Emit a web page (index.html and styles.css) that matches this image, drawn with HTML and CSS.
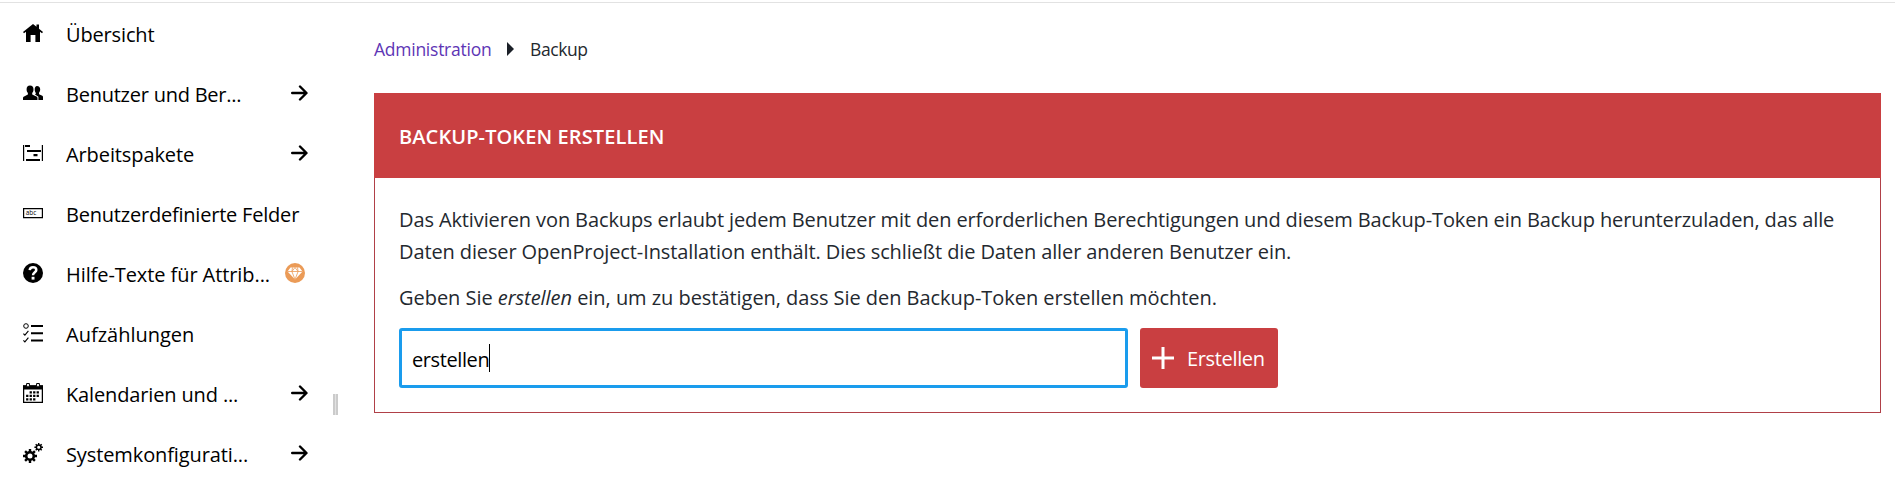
FILE: index.html
```html
<!DOCTYPE html>
<html lang="de">
<head>
<meta charset="utf-8">
<title>Backup</title>
<link rel="stylesheet" href="styles.css">
</head>
<body>
<svg width="0" height="0" class="sprite"><defs>
<symbol id="arrow" viewBox="0 0 17 16"><path d="M1.200 8h14M9 1.500 15.500 8 9 14.500" fill="none" stroke="#000" stroke-width="2.400" stroke-linecap="round" stroke-linejoin="round"/></symbol>
</defs></svg>
<div class="layout">
<nav class="sidebar">
  <a class="item"><svg class="icon" viewBox="0 0 20 20"><path d="M10 1 0 9l1 1.200 2-1.400V19h4.600v-7h4.800v7H17V8.800l2 1.400L20 9l-4-3.300V1.500h-2.500v2.300z"/></svg><span class="label l1">Übersicht</span></a>
  <a class="item"><svg class="icon" viewBox="0 0 20 20"><path d="M14 3c2 0 3.200 1.300 3.200 3.300 0 1.500-.5 2.700-1.200 3.400v1.500l3.300 1.600c.5.300.7.700.7 1.300V17h-4.600v-3.300L12 11.400c.6-.3.900-.7 1-1.300-.8-.8-1.300-2.200-1.300-3.900 0-1.900.9-3.200 2.300-3.200z"/><path d="M7 2.500c2.300 0 3.500 1.500 3.500 3.700 0 1.600-.5 2.900-1.300 3.700v1.600l4.200 2c.8.400 1.100.8 1.100 1.600v2H0v-2c0-.8.300-1.200 1.100-1.600l3.800-2V9.900C4.100 9.100 3.600 7.800 3.600 6.200 3.600 4 4.700 2.500 7 2.500z"/></svg><span class="label l2">Benutzer und Ber...</span><svg class="arrow"><use href="#arrow"/></svg></a>
  <a class="item"><svg class="icon" viewBox="0 0 20 20"><path d="M0 2h1.200v16H0zM18.800 2H20v16h-1.200zM2 2h5v2H2zM4 7h14v2H4zM10.500 11h4v2.200h-4zM3 16h14v2H3z"/></svg><span class="label l3">Arbeitspakete</span><svg class="arrow"><use href="#arrow"/></svg></a>
  <a class="item"><svg class="icon" viewBox="0 0 20 20"><path d="M.6 5.600h18.800v9H.6z" fill="none" stroke="#000" stroke-width="1.200"/><text x="2.800" y="12.300" textLength="10.500" lengthAdjust="spacingAndGlyphs" class="abc">abc</text></svg><span class="label l4">Benutzerdefinierte Felder</span></a>
  <a class="item"><svg class="icon" viewBox="0 0 20 20"><circle cx="10" cy="10" r="10"/><path d="M6.700 7.200C6.900 5.200 8 4.300 10 4.300c2 0 3.300 1 3.300 2.600C13.300 9.300 10 9.200 10 12.300" fill="none" stroke="#fff" stroke-width="2.500"/><path d="M8.600 13.800h2.900v2.800H8.600z" fill="#fff"/></svg><span class="label l5">Hilfe-Texte für Attrib...</span><svg class="gem" viewBox="0 0 20 20"><circle cx="10" cy="10" r="10" fill="#eb9b57"/><path d="M5.500 4.500h9l3 4L10 16.500 2.500 8.500z" fill="#fff"/><path d="M2.500 8.500h15M7.500 4.500 6.900 8.500 10 16.500l3.100-8L12.500 4.500M6.900 8.500 10 4.500l3.100 4" fill="none" stroke="#eb9b57" stroke-width=".8"/></svg></a>
  <a class="item"><svg class="icon" viewBox="0 0 20 20"><path d="M8 2h12v2H8zM8 9.300h12v2H8zM8 16.400h12v2H8z"/><circle cx="3" cy="3" r="2.300" fill="none" stroke="#000"/><path d="m.4 10.600 1.500 1.600 3.500-4.300M.4 17.300l1.500 1.600 3.500-4.300" fill="none" stroke="#000" stroke-width="1.100"/></svg><span class="label l6">Aufzählungen</span></a>
  <a class="item"><svg class="icon" viewBox="0 0 20 20"><path d="M.6 3h18.800v16.400H.6z" fill="none" stroke="#000" stroke-width="1.300"/><path d="M0 2.500h20v4H0z"/><path d="M3.600.5h2.800v3.300H3.600zM13.600.5h2.800v3.300h-2.800z" fill="#fff" stroke="#000"/><path d="M6.600 8.200h2.300v2.300H6.600zm3.500 0h2.300v2.300h-2.300zm3.500 0h2.300v2.300h-2.300zM3.100 11.700h2.300V14H3.100zm3.500 0h2.300V14H6.600zm3.500 0h2.300V14h-2.300zm3.500 0h2.300V14h-2.300zM3.100 15.200h2.300v2.300H3.100zm3.500 0h2.300v2.300H6.600zm3.500 0h2.300v2.300h-2.300z"/></svg><span class="label l7">Kalendarien und ...</span><svg class="arrow"><use href="#arrow"/></svg></a>
  <a class="item"><svg class="icon" viewBox="0 0 20 20"><g fill="none" stroke="#000"><circle cx="7" cy="13" r="3.800" stroke-width="2.600"/><path d="M7 6v3M7 17v3M0 13h3M11 13h3M2.100 8.100l2 2M9.900 15.900l2 2M2.100 17.900l2-2M9.900 10.100l2-2" stroke-width="2.400"/><circle cx="15.700" cy="4.300" r="2.300" stroke-width="1.500"/><path d="M15.700 0v2M15.700 6.600v2M11.400 4.300h2M18 4.300h2M12.700 1.300l1.300 1.300M17.400 6l1.300 1.300M12.700 7.300 14 6M17.400 2.600l1.300-1.300" stroke-width="1.400"/></g></svg><span class="label l8">Systemkonfigurati...</span><svg class="arrow"><use href="#arrow"/></svg></a>
</nav>
<div class="resizer"><span></span></div>
<main class="content">
  <div class="crumbs"><a class="link">Administration</a><svg class="caret" viewBox="0 0 7 14"><path d="M0 0 7 7 0 14z"/></svg><span class="current">Backup</span></div>
  <section class="panel">
    <h1 class="title">BACKUP-TOKEN ERSTELLEN</h1>
    <div class="body">
      <p class="text">Das Aktivieren von Backups erlaubt jedem Benutzer mit den erforderlichen Berechtigungen und diesem Backup-Token ein Backup herunterzuladen, das alle<br>Daten dieser OpenProject-Installation enthält. Dies schließt die Daten aller anderen Benutzer ein.</p>
      <p class="text confirm">Geben Sie <em>erstellen</em> ein, um zu bestätigen, dass Sie den Backup-Token erstellen möchten.</p>
      <div class="form">
        <div class="input"><span class="value">erstellen</span><span class="cursor"></span></div>
        <button class="button"><svg class="plus" viewBox="0 0 22 22"><path d="M0 11h22M11 0v22"/></svg><span class="caption">Erstellen</span></button>
      </div>
    </div>
  </section>
</main>
</div>
</body>
</html>
```
FILE: styles.css
```css
* { box-sizing: border-box; }
body { margin: 0; background: #fff; font: 20px/32px "Open Sans", sans-serif; color: #24292f; overflow: hidden; }
.sprite { display: none; }
.layout { display: flex; height: 480px; padding-top: 1px; }
.layout::before { content: ""; position: absolute; left: 0; right: 0; top: 2px; height: 1px; background: #e2e2e2; }
.sidebar { width: 332px; padding-top: 3px; }
.item { display: flex; align-items: center; height: 60px; padding: 0 24px 0 23px; color: #000; white-space: nowrap; }
.icon { width: 20px; height: 20px; margin: 0 23px 2px 0; flex: none; }
.label { flex: 1; padding-top: 2px; }
.l1 { letter-spacing: -.15px; }
.l2 { letter-spacing: -.24px; }
.l3 { letter-spacing: -.1px; }
.l4 { letter-spacing: -.21px; }
.l5 { letter-spacing: -.08px; }
.l7 { letter-spacing: -.14px; }
.l8 { letter-spacing: -.11px; }
.abc { font: 6.5px "Open Sans", sans-serif; }
.arrow { width: 17px; height: 16px; margin-bottom: 2px; flex: none; }
.gem { width: 20px; height: 20px; margin: 0 3px 2px 0; flex: none; }
.resizer { width: 42px; padding: 393px 0 0 1px; }
.resizer span { display: block; width: 5px; height: 21px; border: solid #cbcbcb; border-width: 0 2px; background: #e2e2e2; }
.content { width: 1507px; padding-top: 31px; }
.crumbs { display: flex; align-items: center; height: 32px; font-size: 17.5px; margin-bottom: 29px; }
.link { width: 133px; padding-top: 1px; color: #5d35b5; letter-spacing: -.25px; }
.caret { width: 7px; height: 14px; margin: 2px 16px 0 0; fill: #1b2028; }
.current { padding-top: 1px; letter-spacing: -.4px; }
.panel { height: 320px; border: 1px solid #b04048; }
.title { display: flex; align-items: center; height: 85px; margin: -1px -1px 0; padding: 2px 0 0 25px; background: #c93f41; color: #fff; font-size: 20px; font-weight: 600; letter-spacing: .1px; }
.body { padding: 26px 24px 0; }
.text { margin: 0 0 14px; letter-spacing: -.115px; white-space: nowrap; }
.confirm { letter-spacing: -.04px; }
.form { display: flex; gap: 12px; }
.input { display: flex; align-items: center; width: 729px; height: 60px; border: 3px solid #1a9ced; border-radius: 3px; padding: 2px 0 0 10px; color: #000; }
.value { padding-top: 1px; letter-spacing: -.4px; }
.cursor { width: 1px; height: 28px; margin-bottom: 2px; background: #000; }
.button { display: flex; align-items: center; gap: 13px; width: 138px; height: 60px; border: 0; border-radius: 3px; padding: 0 0 0 12px; background: #c93f41; color: #fff; font: inherit; letter-spacing: -.35px; }
.caption { padding-top: 2px; }
.plus { width: 22px; height: 22px; fill: none; stroke: #fff; stroke-width: 3px; flex: none; }
```
